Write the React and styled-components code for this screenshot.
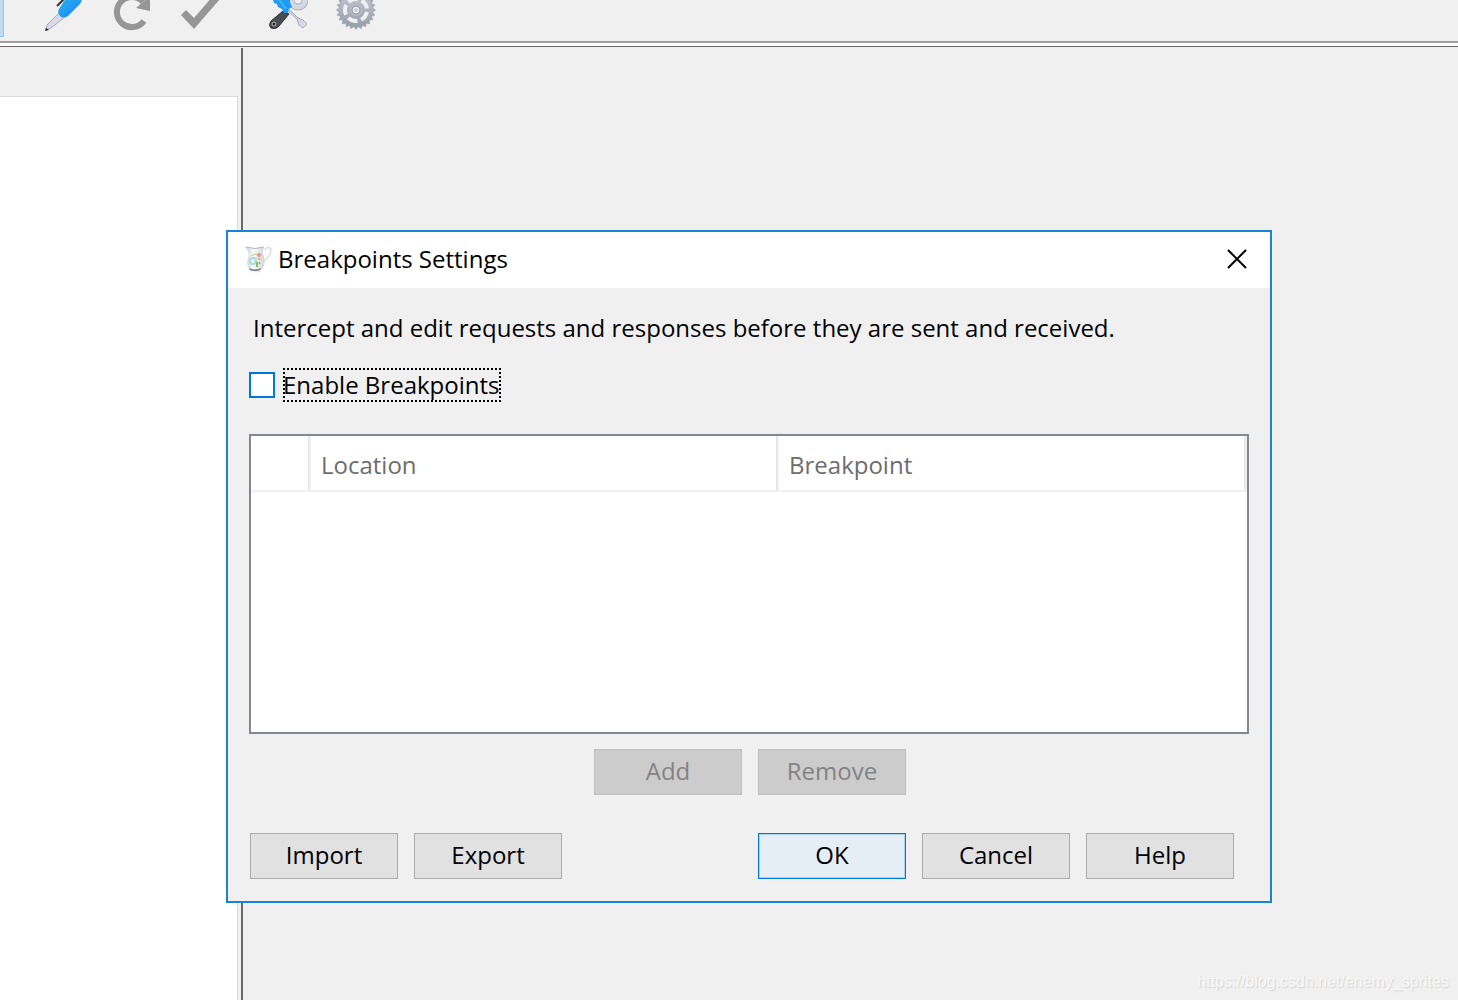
import React, { useState } from "react";
import styled, { createGlobalStyle } from "styled-components";

const GlobalStyle = createGlobalStyle`
  * {
    box-sizing: border-box;
  }

  body {
    margin: 0;
    background: #f0f0f0;
    color: #000000;
    font-family: "Open Sans", "Noto Sans", sans-serif;
    font-size: 24px;
    line-height: 32px;
  }
`;

const AppWrapper = styled.div`
  position: relative;
  display: flex;
  flex-direction: column;
  min-height: 100vh;
  overflow: hidden;
`;

const Toolbar = styled.header`
  display: flex;
  gap: 28px;
  height: 41px;
`;

const ToolButton = styled.button`
  width: 40px;
  height: 34px;
  margin-left: ${(props) => (props.$newGroup ? "20px" : "0")};
  padding: 0;
  border: none;
  background: none;

  svg {
    display: block;
  }
`;

const ActiveTool = styled.button`
  width: 4px;
  height: 37px;
  margin-right: 12px;
  padding: 0;
  border: solid #90c8f6;
  border-width: 0 1px 1px 0;
  background: #c0dcf3;
`;

const ToolbarEdge = styled.div`
  height: 6px;
  border-top: 2px solid #a0a0a0;
  border-bottom: 1px solid #696969;
  background: #ffffff;
`;

const Workspace = styled.main`
  display: flex;
  flex: 1;
  padding-top: 1px;
`;

const Sidebar = styled.aside`
  display: flex;
  flex-direction: column;
  width: 243px;
  padding: 48px 3px 0 0;
  border-right: 2px solid #696969;
`;

const SidebarList = styled.div`
  flex: 1;
  border: solid #dadada;
  border-width: 1px 1px 0 0;
  background: #ffffff;
`;

const Dialog = styled.section`
  position: absolute;
  top: 230px;
  left: 226px;
  right: 186px;
  border: 2px solid #1883d7;
  background: #f0f0f0;
`;

const TitleBar = styled.div`
  display: flex;
  align-items: center;
  gap: 6px;
  height: 56px;
  padding: 0 22px 2px 16px;
  background: #ffffff;
`;

const Title = styled.h1`
  flex: 1;
  margin: 0;
  font-size: 24px;
  font-weight: 400;
`;

const CloseButton = styled.button`
  width: 22px;
  height: 22px;
  padding: 0;
  border: none;
  background: none;

  svg {
    display: block;
  }
`;

const DialogBody = styled.div`
  padding: 24px 21px 22px;
`;

const Description = styled.p`
  margin: 0 4px 24px;
`;

const CheckRow = styled.div`
  display: flex;
  align-items: center;
  gap: 8px;
  margin-bottom: 32px;
`;

const Checkbox = styled.input`
  appearance: none;
  width: 26px;
  height: 26px;
  margin: 0;
  border: 2px solid #0078d7;
  background: ${(props) => (props.checked ? "#0078d7" : "#ffffff")};
  box-shadow: inset 0 0 0 3px #ffffff;
`;

const CheckLabel = styled.label`
  height: 34px;
  padding: 2px 2px 2px 0;
  outline: 2px dotted #000000;
  outline-offset: -2px;
  line-height: 30px;
  white-space: nowrap;
`;

const TableFrame = styled.div`
  height: 300px;
  margin-bottom: 15px;
  border: 2px solid #828790;
  background: #ffffff;
`;

const Table = styled.table`
  width: 100%;
  border-collapse: separate;
  border-spacing: 0;
  table-layout: fixed;
`;

const HeadCell = styled.th`
  width: ${(props) => props.$width || "auto"};
  height: 56px;
  padding: 4px 10px 0;
  border: solid #f0f0f0;
  border-width: 0 2px 2px 0;
  box-shadow: inset -1px 0 0 #e3e3e3;
  color: #6d6d6d;
  font-weight: 400;
  text-align: left;
`;

const ButtonRow = styled.div`
  display: flex;
  justify-content: ${(props) => props.$justify};
  gap: 16px;
`;

const TableActions = styled(ButtonRow)`
  padding-left: 2px;
`;

const Footer = styled(ButtonRow)`
  padding: 38px 15px 0 1px;
`;

const Button = styled.button`
  width: 148px;
  height: 46px;
  padding: 0 0 2px;
  border: 1px solid #adadad;
  background: #e1e1e1;
  color: #000000;
  font: inherit;

  &:disabled {
    border-color: #bfbfbf;
    background: #cccccc;
    color: #838383;
  }
`;

const PrimaryButton = styled(Button)`
  border-color: #0078d7;
  background: #e5edf5;
  box-shadow: inset 0 0 0 1px #a9d1f2;
`;

const PageLink = styled.a`
  position: absolute;
  right: 9px;
  bottom: 8px;
  color: #f8f8f8;
  font-family: "Liberation Sans", sans-serif;
  font-size: 16px;
  line-height: 20px;
  text-decoration: none;
  text-shadow: 1px 1px 1px #d4d4d4;
`;

const PenIcon = () => (
  <svg width="40" height="34" viewBox="0 0 40 34">
    <defs>
      <linearGradient id="penBlue" x1="0" y1="0" x2="1" y2="1">
        <stop offset="0" stopColor="#27b4f7" />
        <stop offset="1" stopColor="#1d85ec" />
      </linearGradient>
    </defs>
    <path d="M15 13 L3 25 L2 30 L7 28 L21 17 Z" fill="#d9dae7" stroke="#a9a8ba" />
    <path d="M1 31 L2 28 L5 30 Z" fill="#222222" />
    <path d="M24 -5 L15 9 Q13 13 16 16 Q19 19 24 16 L36 4 Q39 0 37 -5 Z" fill="url(#penBlue)" />
    <path d="M13 6 L20 -1" stroke="#333333" strokeWidth="2" />
  </svg>
);

const RepeatIcon = () => (
  <svg width="40" height="34" viewBox="0 0 40 34">
    <path d="M32 21 A15 15 0 1 1 31 2" fill="none" stroke="#969696" strokeWidth="6" />
    <path d="M38 -4 V11 L24 8 Z" fill="#969696" />
  </svg>
);

const CheckIcon = () => (
  <svg width="40" height="34" viewBox="0 0 40 34">
    <path d="M1 15 L6 10 L14 18 L33 -4 L40 -1 L14 29 Z" fill="#969696" />
  </svg>
);

const ToolsIcon = () => (
  <svg width="40" height="34" viewBox="0 0 40 34">
    <circle cx="30" cy="0" r="7" fill="none" stroke="#a9aebd" strokeWidth="7" />
    <circle cx="30" cy="0" r="7" fill="none" stroke="#d5d9e4" strokeWidth="5" />
    <path d="M21 12 L29 19 L31 25 L35 28 L39 24 L35 20 L30 18 L22 10 Z" fill="#d5dae5" stroke="#a2a8b8" />
    <path d="M15 11 L3 21 Q0 25 3 28 Q8 30 11 26 L21 14 Z" fill="#4a4c51" stroke="#2c2d31" />
    <circle cx="6" cy="24" r="2" fill="#222222" stroke="#b9b9b9" />
    <path d="M2 -3 L5 0 L6 3 L9 4 L10 7 L14 9 L16 13 L20 13 L21 9 L24 7 L22 2 L22 -4 Z" fill="#209bf5" />
    <path d="M10 -2 L18 9" stroke="#41b3ff" strokeWidth="2" />
  </svg>
);

const gearTeeth = Array.from({ length: 24 }, (_, i) => i * 15);

const GearIcon = () => (
  <svg width="40" height="34" viewBox="0 0 40 34">
    <defs>
      <linearGradient id="gearGrey" x1="0" y1="0" x2="0" y2="1">
        <stop offset="0" stopColor="#c3c7d2" />
        <stop offset="1" stopColor="#989dac" />
      </linearGradient>
    </defs>
    <g transform="translate(20 10)">
      {gearTeeth.map((angle) => (
        <path key={angle} d="M-3 -16 L0 -20 L3 -16 Z" fill="#a3a8b6" transform={`rotate(${angle})`} />
      ))}
      <circle r="17" fill="url(#gearGrey)" />
      <circle r="11" fill="none" stroke="#f0f0f0" strokeWidth="4" strokeDasharray="10 3.82" transform="rotate(10)" />
      <circle r="6" fill="#b5bac7" />
      <circle r="4" fill="#f0f0f0" stroke="#8f95a5" />
      <circle r="2" fill="#c9cdd7" />
    </g>
  </svg>
);

const JugIcon = () => (
  <svg width="28" height="28" viewBox="0 0 28 28">
    <defs>
      <linearGradient id="jugGlaze">
        <stop offset="0" stopColor="#c4c8ca" />
        <stop offset="0.4" stopColor="#f9fafa" />
        <stop offset="1" stopColor="#d2d5d7" />
      </linearGradient>
    </defs>
    <path d="M20 5 Q26 0 27 5 Q27 11 20 16" fill="none" stroke="#dcdfe0" strokeWidth="1.5" />
    <path
      d="M1 2 Q9 4 20 2 Q18 7 20 12 Q22 20 18 24 L16 27 Q11 28 6 27 L5 24 Q2 19 4 13 Q6 7 1 2 Z"
      fill="url(#jugGlaze)"
    />
    <path d="M2 2 Q11 5 20 2" fill="none" stroke="#b3b7b9" />
    <ellipse cx="9" cy="16" rx="4" ry="4" fill="#a5dbe6" />
    <circle cx="9" cy="16" r="2" fill="#e7f5e8" />
    <path d="M7 11 Q11 8 14 10" fill="none" stroke="#b9d77b" />
    <circle cx="15" cy="10" r="2" fill="#f08abb" />
    <path d="M14 13 L16 15" stroke="#e8c348" strokeWidth="2" />
    <path d="M13 17 V22" stroke="#85bd73" strokeWidth="2" />
    <path d="M15 17 L16 19" stroke="#d75f86" />
    <path d="M5 23 Q11 26 17 23 L16 25 Q11 27 6 25 Z" fill="#6c7274" />
  </svg>
);

const CloseIcon = () => (
  <svg width="22" height="22" viewBox="0 0 22 22">
    <path d="M2 2 L20 20 M20 2 L2 20" stroke="#000000" strokeWidth="2" />
  </svg>
);

const tools = [
  { name: "Compose", Icon: PenIcon },
  { name: "Repeat", Icon: RepeatIcon },
  { name: "Validate", Icon: CheckIcon },
  { name: "Tools", Icon: ToolsIcon, newGroup: true },
  { name: "Settings", Icon: GearIcon },
];

const App = () => {
  const [enabled, setEnabled] = useState(false);

  return (
    <AppWrapper>
      <GlobalStyle />
      <Toolbar>
        <ActiveTool aria-label="Breakpoints" />
        {tools.map(({ name, Icon, newGroup }) => (
          <ToolButton key={name} aria-label={name} $newGroup={newGroup}>
            <Icon />
          </ToolButton>
        ))}
      </Toolbar>
      <ToolbarEdge />

      <Workspace>
        <Sidebar>
          <SidebarList />
        </Sidebar>
      </Workspace>

      <Dialog role="dialog" aria-labelledby="dialog-title">
        <TitleBar>
          <JugIcon />
          <Title id="dialog-title">Breakpoints Settings</Title>
          <CloseButton aria-label="Close">
            <CloseIcon />
          </CloseButton>
        </TitleBar>

        <DialogBody>
          <Description>
            Intercept and edit requests and responses before they are sent and received.
          </Description>
          <CheckRow>
            <Checkbox
              id="enable"
              type="checkbox"
              checked={enabled}
              onChange={(e) => setEnabled(e.target.checked)}
            />
            <CheckLabel htmlFor="enable">Enable Breakpoints</CheckLabel>
          </CheckRow>

          <TableFrame>
            <Table>
              <thead>
                <tr>
                  <HeadCell $width="60px" aria-label="Enabled" />
                  <HeadCell>Location</HeadCell>
                  <HeadCell>Breakpoint</HeadCell>
                </tr>
              </thead>
            </Table>
          </TableFrame>

          <TableActions $justify="center">
            <Button disabled>Add</Button>
            <Button disabled>Remove</Button>
          </TableActions>

          <Footer $justify="space-between">
            <ButtonRow>
              <Button>Import</Button>
              <Button>Export</Button>
            </ButtonRow>
            <ButtonRow>
              <PrimaryButton>OK</PrimaryButton>
              <Button>Cancel</Button>
              <Button>Help</Button>
            </ButtonRow>
          </Footer>
        </DialogBody>
      </Dialog>

      <PageLink href="https://blog.csdn.net/enemy_sprites">https://blog.csdn.net/enemy_sprites</PageLink>
    </AppWrapper>
  );
};

export default App;
